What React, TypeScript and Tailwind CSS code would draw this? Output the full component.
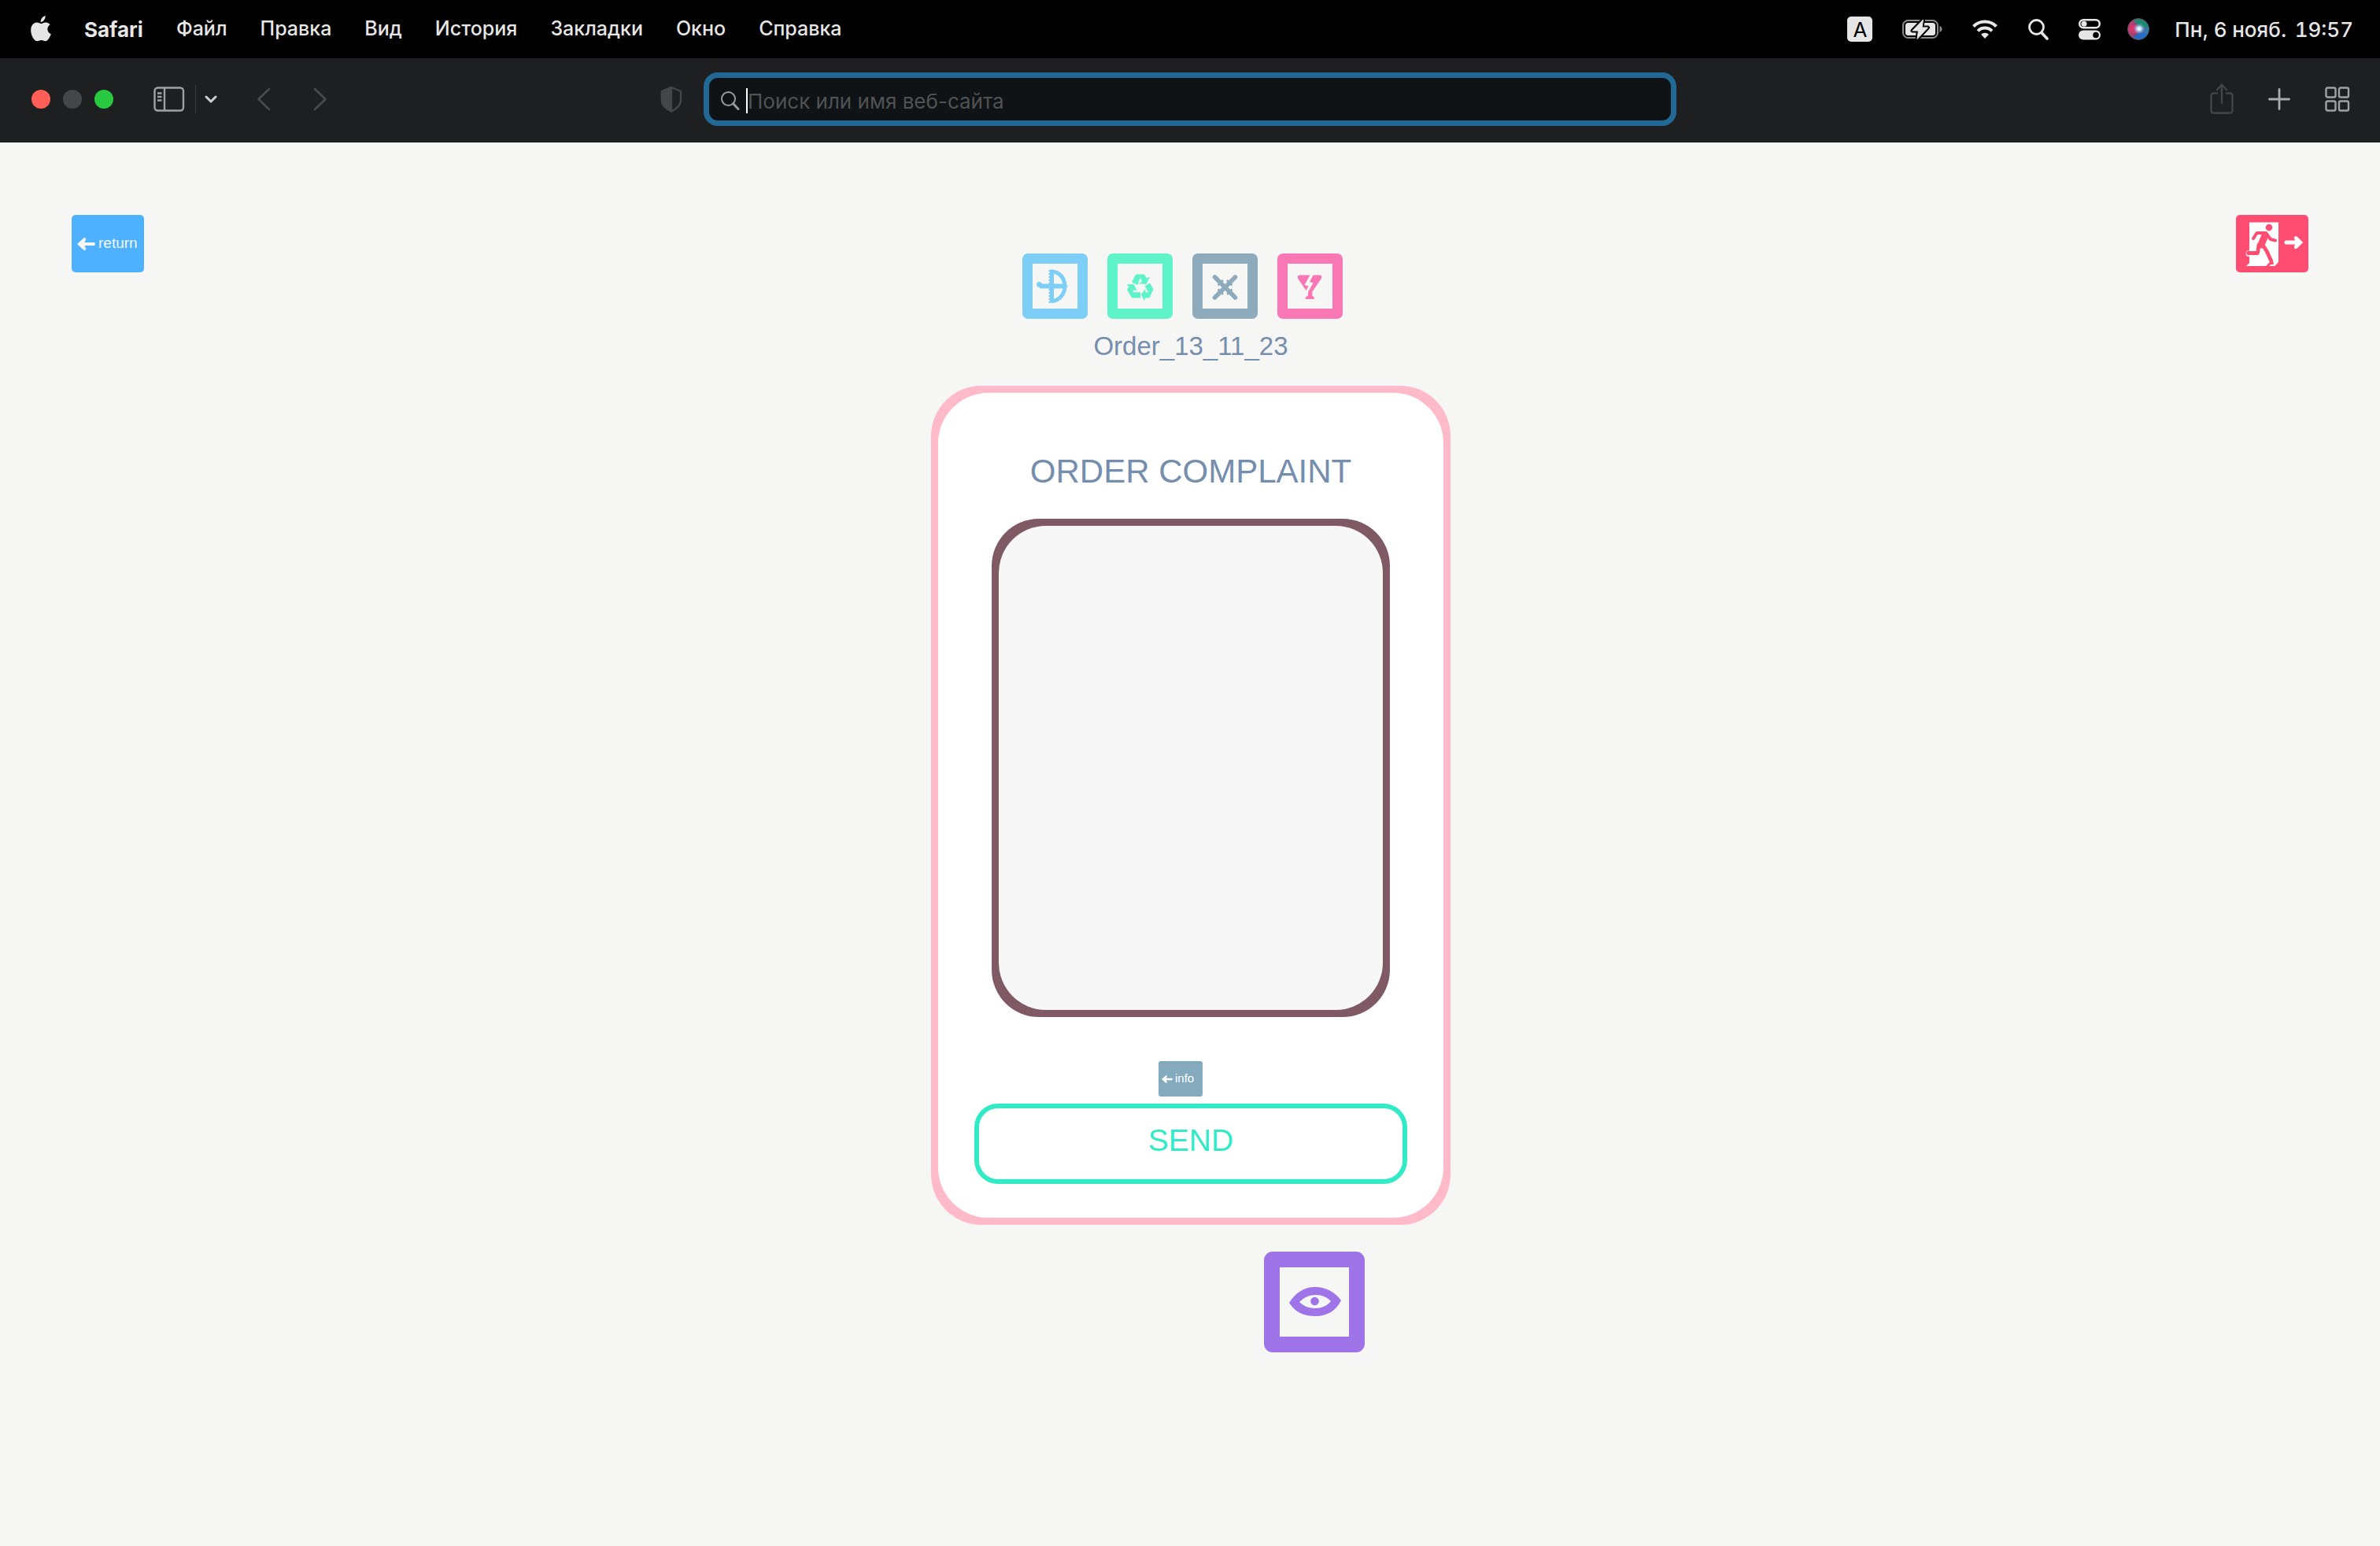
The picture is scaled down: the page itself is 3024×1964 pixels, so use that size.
import React from "react";

const menuItems = ["Файл", "Правка", "Вид", "История", "Закладки", "Окно", "Справка"];

function AppleLogo() {
  return (
    <svg viewBox="0 0 26 34" className="h-[34px] w-[26px]" fill="#e6e6e6" aria-hidden="true">
      <path d="M12.6 8.2c-.3-3.600 2.600-7.300 6-8.100.5 3.900-2.500 7.700-6 8.100z" />
      <path d="M13.200 10.100c1.500 0 3.300-1.700 6-1.700 2 0 4.200 1 5.500 2.900-4.900 2.900-4.200 10 1.100 12-.9 2.600-3.800 9-6.900 9-2 0-2.800-1.300-5.400-1.300-2.600 0-3.500 1.300-5.400 1.300C4.300 32.300.2 25.100.2 18.300c0-6.400 3.900-9.800 7.500-9.800 2.400 0 4.200 1.600 5.500 1.600z" />
    </svg>
  );
}

function BatteryIcon() {
  return (
    <svg viewBox="0 0 52 28" className="h-7 w-[52px]" aria-hidden="true">
      <rect x="1" y="3" width="44" height="22" rx="6.500" fill="none" stroke="#8a8a8a" strokeWidth="2" />
      <rect x="4" y="6" width="38" height="16" rx="3.500" fill="#e6e6e6" />
      <path d="M47.500 10v8c1.800-.6 3-2.200 3-4s-1.200-3.400-3-4z" fill="#8a8a8a" />
      <path d="M26.500 2 13 16h7.500L19 26.500 32.500 12H25z" fill="#e6e6e6" stroke="#000" strokeWidth="5" strokeLinejoin="round" />
      <path d="M26.500 2 13 16h7.500L19 26.500 32.500 12H25z" fill="#e6e6e6" stroke="#e6e6e6" strokeWidth="1" strokeLinejoin="round" />
    </svg>
  );
}

function WifiIcon() {
  return (
    <svg viewBox="0 0 34 26" className="h-[26px] w-[34px]" fill="none" stroke="#e6e6e6" strokeWidth="4" aria-hidden="true">
      <path d="M2.500 9.500a20.500 20.500 0 0 1 29 0" />
      <path d="M8 15.300a12.800 12.800 0 0 1 18 0" />
      <path d="M17 25l-5-5.200a7.300 7.300 0 0 1 10 0z" fill="#e6e6e6" stroke="none" />
    </svg>
  );
}

function ControlIcon() {
  return (
    <svg viewBox="0 0 28 28" className="h-7 w-7" aria-hidden="true">
      <rect x="1.250" y="2.250" width="25.500" height="10" rx="5" fill="none" stroke="#e6e6e6" strokeWidth="2.500" />
      <circle cx="7" cy="7.200" r="3.500" fill="#e6e6e6" />
      <rect x="0" y="15.500" width="28" height="12" rx="6" fill="#e6e6e6" />
      <circle cx="22" cy="21.500" r="3.800" fill="#000" />
    </svg>
  );
}

function SiriIcon() {
  return (
    <svg viewBox="0 0 28 28" className="h-7 w-7" aria-hidden="true">
      <defs>
        <radialGradient id="siriCore">
          <stop offset="0" stopColor="#fff" />
          <stop offset="0.350" stopColor="#cdeeff" stopOpacity="0.900" />
          <stop offset="1" stopColor="#6aa8e8" stopOpacity="0" />
        </radialGradient>
        <linearGradient id="siriBase" x1="0" y1="0.400" x2="1" y2="0.600">
          <stop offset="0" stopColor="#d2386f" />
          <stop offset="0.450" stopColor="#7a4a78" />
          <stop offset="1" stopColor="#1e86c8" />
        </linearGradient>
      </defs>
      <circle cx="14" cy="14" r="13.500" fill="url(#siriBase)" stroke="#555" strokeWidth="1" />
      <path d="M8 3C14-.5 24 2 26.500 12 20 12 13 10 8 3z" fill="#1c8a6c" />
      <circle cx="8.500" cy="14" r="5.500" fill="#e0376f" opacity="0.800" />
      <path d="M8 24c4-4 11-6 17-4-4 7-12 9-17 4z" fill="#1a6fd0" opacity="0.900" />
      <ellipse cx="15" cy="13.500" rx="7.500" ry="7" fill="url(#siriCore)" />
    </svg>
  );
}

function MenuBar() {
  return (
    <header className="flex h-[74px] items-center justify-between bg-black pr-[34px] pl-[39px] text-[25px] font-medium text-[#e6e6e6]">
      <nav className="flex items-center gap-[42px]">
        <AppleLogo />
        <span className="text-[26px] font-bold">Safari</span>
        {menuItems.map((item) => (
          <span key={item}>{item}</span>
        ))}
      </nav>
      <div className="flex items-center text-[26px] whitespace-pre">
        <span className="mr-[38px] flex size-8 items-center justify-center rounded-[5px] bg-[#e6e6e6] font-normal text-black">A</span>
        <span className="mr-9"><BatteryIcon /></span>
        <span className="mr-[38px]"><WifiIcon /></span>
        <svg viewBox="0 0 26 28" className="mr-[38px] h-7 w-[26px]" fill="none" stroke="#e6e6e6" aria-hidden="true">
          <circle cx="10.500" cy="11.500" r="9" strokeWidth="2.800" />
          <path d="m17 18.500 7 7.500" strokeWidth="3.600" strokeLinecap="round" />
        </svg>
        <span className="mr-[34px]"><ControlIcon /></span>
        <span className="mr-8"><SiriIcon /></span>
        <span className="mr-[10px]">Пн, 6 нояб.</span>
        <span className="tabular-nums">19:57</span>
      </div>
    </header>
  );
}

function Toolbar() {
  return (
    <div className="grid h-[107px] grid-cols-[1fr_1236px_1fr] items-center bg-[#1e1f21] pb-[3px]">
      <div className="flex items-center pr-[27px] pl-10">
        <div className="flex gap-4">
          <button aria-label="Закрыть" className="size-6 rounded-full bg-[#ff5f57]" />
          <button aria-label="Свернуть" className="size-6 rounded-full bg-[#454648]" />
          <button aria-label="Развернуть" className="size-6 rounded-full bg-[#28c840]" />
        </div>
        <button aria-label="Боковое меню" className="ml-[51px]">
          <svg viewBox="0 0 40 32" className="h-8 w-10" fill="none" stroke="#a0a1a2" strokeWidth="2.400">
            <rect x="1.500" y="1.500" width="36.500" height="29" rx="4" />
            <path d="M14 2v28M5 8.500h5.500M5 13h5.500M5 17.500h5.500" />
          </svg>
        </button>
        <span className="ml-[13px] h-9 w-px bg-[#3a3b3d]" />
        <button aria-label="Группы вкладок" className="ml-[11px]">
          <svg viewBox="0 0 16 12" className="h-3 w-4" fill="none" stroke="#cfcfd0" strokeWidth="3" strokeLinecap="round" strokeLinejoin="round">
            <path d="m2 3 6 6 6-6" />
          </svg>
        </button>
        <button aria-label="Назад" className="ml-[50px]">
          <svg viewBox="0 0 18 30" className="h-[30px] w-[18px]" fill="none" stroke="#4a4b4d" strokeWidth="2.600" strokeLinecap="round" strokeLinejoin="round">
            <path d="M16 2 2.500 15 16 28" />
          </svg>
        </button>
        <button aria-label="Вперёд" className="ml-[54px]">
          <svg viewBox="0 0 18 30" className="h-[30px] w-[18px]" fill="none" stroke="#4a4b4d" strokeWidth="2.600" strokeLinecap="round" strokeLinejoin="round">
            <path d="m2 2 13.500 13L2 28" />
          </svg>
        </button>
        <svg viewBox="0 0 28 34" className="ml-auto h-[34px] w-7" fill="none" stroke="#454648" strokeWidth="2.400" strokeLinejoin="round" aria-hidden="true">
          <path d="M14 2 26 7v12c0 6-5 10-12 13.500C7 29 2 25 2 19V7z" />
          <path d="M14 2v30.500C7 29 2 25 2 19V7z" fill="#454648" />
        </svg>
      </div>
      <label className="flex h-[68px] items-center rounded-[18px] border-[7px] border-[#226894] bg-[#0f1315] pt-1 pl-[15px]">
        <svg viewBox="0 0 24 24" className="h-6 w-6" fill="none" stroke="#98999a" aria-hidden="true">
          <circle cx="9.500" cy="9.500" r="8.500" strokeWidth="2" />
          <path d="m15.500 15.500 6.500 7" strokeWidth="3" strokeLinecap="round" />
        </svg>
        <span className="ml-2 h-8 w-[2px] bg-white" />
        <input
          type="text"
          aria-label="Адрес"
          placeholder="Поиск или имя веб-сайта"
          className="min-w-0 flex-1 bg-transparent text-[26px] text-white outline-none placeholder:text-[#505253]"
        />
      </label>
      <div className="flex items-center justify-end gap-[44px] pr-[38px]">
        <button aria-label="Поделиться">
          <svg viewBox="0 0 30 40" className="h-10 w-[30px]" fill="none" stroke="#434446" strokeWidth="2.400" strokeLinecap="round" strokeLinejoin="round">
            <path d="M9 12.500H4.500a3 3 0 0 0-3 3v19a3 3 0 0 0 3 3h21a3 3 0 0 0 3-3v-19a3 3 0 0 0-3-3H21" />
            <path d="M15 25V2M9 8l6-6.500L21 8" />
          </svg>
        </button>
        <button aria-label="Новая вкладка">
          <svg viewBox="0 0 28 28" className="h-7 w-7" stroke="#a9aaab" strokeWidth="2.800" strokeLinecap="round">
            <path d="M14 1.500v25M1.500 14h25" />
          </svg>
        </button>
        <button aria-label="Обзор вкладок">
          <svg viewBox="0 0 32 32" className="h-8 w-8" fill="none" stroke="#a0a1a2" strokeWidth="2.400">
            <rect x="1.500" y="1.500" width="12" height="12" rx="2" />
            <rect x="18" y="1.500" width="12" height="12" rx="2" />
            <rect x="1.500" y="18.500" width="12" height="12" rx="2" />
            <rect x="18" y="18.500" width="12" height="12" rx="2" />
          </svg>
        </button>
      </div>
    </div>
  );
}

function BowIcon() {
  return (
    <svg viewBox="0 0 57 57" className="size-[57px]" fill="none" stroke="#7ecff8" aria-hidden="true">
      <path d="M24 10c10 0 17 8.500 17 18.500S34 47 24 47.500" strokeWidth="5" />
      <path d="M24.500 7.500v42" strokeWidth="5" />
      <path d="M21.500 8v42" strokeWidth="2" strokeDasharray="2.500 1.500" />
      <path d="M9 28.500h34" strokeWidth="6" />
      <circle cx="8.500" cy="26.500" r="3.400" fill="#7ecff8" stroke="none" />
      <path d="m40 22 4.500 6.500-4.500 6.500z" fill="#7ecff8" stroke="none" />
    </svg>
  );
}

function RecycleIcon() {
  return (
    <svg viewBox="0 0 57 57" className="size-[57px]" fill="#5ff3c9" aria-hidden="true">
      <path d="M18 23.500 22.500 14.500 24 13.500H34L36.700 18.500 41 16.500 36.500 26 27 25.500 31 22.500 28.700 18 25.500 27z" />
      <path d="M34.500 28.500 41 24.500 45.500 32.500 41 42.500 39.500 43.500H35L34 47.500 29.800 39 35.500 32V36.300H39z" />
      <path d="M11 26.500 20.500 26 24.800 34.500 21 33.300 19 36.300H29V43.500H19L17.500 42.500 12 33 14.500 29z" />
    </svg>
  );
}

function SwordsIcon() {
  return (
    <svg viewBox="0 0 57 57" className="size-[57px]" fill="none" stroke="#8eabbe" strokeWidth="5.500" strokeLinecap="round" aria-hidden="true">
      <path d="m15.500 17 26 26M41.500 17l-26 26" />
      <path
        d="M19.500 27.500 26 21M31 21l6.500 6.500M37.500 32.500 31 39M26 39l-6.500-6.500"
        strokeWidth="2.600"
        strokeLinecap="butt"
      />
    </svg>
  );
}

function BrokenGlassIcon() {
  return (
    <svg viewBox="0 0 57 57" className="size-[57px]" fill="#f877b4" aria-hidden="true">
      <path d="M15.500 14.500H28.500L21.500 27 26.500 28.500 23.500 34 13.600 19.500C12 17 13 14.500 15.500 14.500z" />
      <path d="M32.500 14.500H40.500C43.500 14.500 44 17 42.500 19.500L31.300 35.500V40.500L33 42C34.500 43.500 34 45 32.500 45H24C22.500 45 22 43.500 23.500 42L26 40.500V36L32.500 24.500 28 23z" />
    </svg>
  );
}

function ArrowLeft({ className, fill }: { className: string; fill: string }) {
  return (
    <svg viewBox="0 0 23 16" className={className} fill={fill} aria-hidden="true">
      <path d="M0 8 8.500.3C10.500-.5 12 1.500 10.800 3L9.500 6h12a1.200 1.200 0 0 1 1.200 1.200v1.600A1.200 1.200 0 0 1 21.500 10h-12l1.300 3c1.200 1.500-.3 3.500-2.300 2.700z" />
    </svg>
  );
}

function ExitIcon() {
  return (
    <svg viewBox="0 0 92 73" className="h-[73px] w-[92px]" aria-hidden="true">
      <path d="M17 9.500h37V60l-5 5H13l4-4z" fill="#fff" />
      <circle cx="42" cy="16" r="4.300" fill="#ff4d72" />
      <path d="M17 46.200h-2.500a4 4 0 0 0 0 5.800H17" fill="none" stroke="#fff" strokeWidth="1.500" />
      <g fill="none" stroke="#ff4d72" strokeLinecap="round" strokeLinejoin="round">
        <path d="M22 30l4.500-7H38l6 8 6 1.500" strokeWidth="4" />
        <path d="m37 26-5 12" strokeWidth="9" />
        <path d="m29 38-1.500 10.500H15.500" strokeWidth="4.800" />
        <path d="m34 38 5 8 6 13" strokeWidth="4.800" />
        <path d="m40 65 3.500-3.500h3" strokeWidth="3" />
      </g>
      <path d="M64 32.500h11l-1-3c-.6-2 2-3.500 3.500-2l7.700 7.500-7.700 7.500c-1.500 1.500-4.100 0-3.500-2l1-3H64a2.500 2.500 0 0 1 0-5z" fill="#fff" />
    </svg>
  );
}

function EyeIcon() {
  return (
    <svg viewBox="0 0 88 88" className="size-[88px]" aria-hidden="true">
      <path d="M12 45C20 32 31 25 45 25s26 7 33 17C72 55 60 62 45 62S20 57 12 45z" fill="#9f74e8" />
      <path d="M25 44C31 38 38 35 46 35c8 0 14 3 19 8-5 6-12 9-20 9s-15-3-20-8z" fill="#f6f6f4" />
      <circle cx="44.500" cy="43" r="5.300" fill="#9f74e8" />
    </svg>
  );
}

export default function App() {
  return (
    <div className="flex min-h-screen flex-col bg-[#f6f6f4] font-['Inter',sans-serif]">
      <MenuBar />
      <Toolbar />
      <main className="flex flex-1 items-start justify-between px-[91px] pt-[92px] font-['Liberation_Sans',Arial,sans-serif]">
        <button className="flex h-[73px] w-[92px] items-center gap-1 rounded-[5px] bg-[#4db1ff] pl-[7px] text-[19px] text-[#f6f6f4]">
          <ArrowLeft className="h-4 w-[23px]" fill="#f6f6f4" />
          return
        </button>

        <div className="flex flex-col items-center pt-[49px] pl-[2px]">
          <div className="mr-[22px] flex gap-[25px]">
            <button aria-label="Bow" className="rounded-[7px] border-[13px] border-[#7ecff8]">
              <BowIcon />
            </button>
            <button aria-label="Recycle" className="rounded-[7px] border-[13px] border-[#5ff3c9]">
              <RecycleIcon />
            </button>
            <button aria-label="Swords" className="rounded-[7px] border-[13px] border-[#8eabbe]">
              <SwordsIcon />
            </button>
            <button aria-label="Fragile" className="rounded-[7px] border-[13px] border-[#f877b4]">
              <BrokenGlassIcon />
            </button>
          </div>
          <p className="mt-[15px] text-[33px] leading-10 text-[#758ead]">Order_13_11_23</p>

          <form className="mt-[30px] w-[660px] rounded-[64px] bg-[#ffbac9] p-[9px]" onSubmit={(e) => e.preventDefault()}>
            <div className="flex flex-col items-center rounded-[64px] bg-white px-[46px] pt-[76px] pb-[43px]">
              <label htmlFor="complaint" className="text-[42px] leading-12 text-[#758ead]">
                ORDER COMPLAINT
              </label>
              <div className="mt-9 flex h-[633px] w-[506px] rounded-[60px] bg-[#7f5963] p-[9px]">
                <textarea id="complaint" className="flex-1 resize-none rounded-[60px] bg-[#f7f7f7] p-10 text-3xl outline-none" />
              </div>
              <button
                type="button"
                className="mt-14 mr-[26px] flex h-[45px] w-14 items-center gap-[3px] rounded-[3px] bg-[#84aabe] pl-1 text-[15px] text-white"
              >
                <ArrowLeft className="h-[10px] w-[14px]" fill="#ffffff" />
                info
              </button>
              <button
                type="submit"
                className="mt-[9px] h-[102px] w-full rounded-[30px] border-[6px] border-[#32ebc6] pb-[7px] text-[39px] text-[#32ebc6]"
              >
                SEND
              </button>
            </div>
          </form>

          <button aria-label="View" className="mt-[34px] ml-[314px] rounded-[11px] border-20 border-[#9f74e8]">
            <EyeIcon />
          </button>
        </div>

        <button aria-label="Exit" className="rounded-[5px] bg-[#ff4d72]">
          <ExitIcon />
        </button>
      </main>
    </div>
  );
}
